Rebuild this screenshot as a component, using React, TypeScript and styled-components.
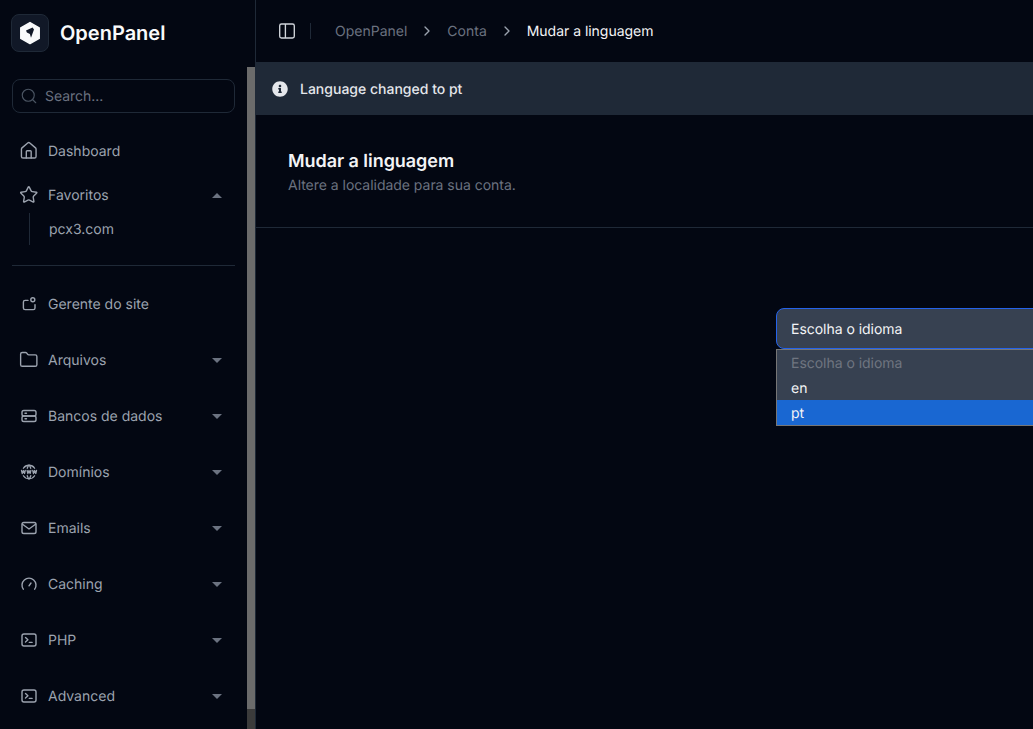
import { ReactNode } from 'react';
import styled, { createGlobalStyle } from 'styled-components';
import { ChevronRight, Folder, House, Search, Star } from 'lucide-react';
import { FaInfoCircle } from 'react-icons/fa';
import { TbWorldWww } from 'react-icons/tb';

const GlobalStyle = createGlobalStyle`
  html, body {
    margin: 0;
    height: 100%;
    overflow: hidden;
    background: #030712;
    font-family: Inter, "Liberation Sans", sans-serif;
    text-rendering: geometricPrecision;
  }
  #root {
    height: 100%;
  }
`;

const Glyph = ({ children }: { children: ReactNode }) => (
  <svg width="18" height="18" viewBox="0 0 18 18" fill="none" stroke="currentColor" strokeWidth="1.4" strokeLinecap="round" strokeLinejoin="round">
    {children}
  </svg>
);

const SiteIcon = () => (
  <Glyph>
    <path d="M8 5.4H5.1a1.7 1.7 0 0 0-1.7 1.7v5.8a1.7 1.7 0 0 0 1.7 1.7h8.2a1.7 1.7 0 0 0 1.7-1.7V9.6" />
    <circle cx="12.8" cy="4.8" r="2" />
  </Glyph>
);

const ServerIcon = () => (
  <Glyph>
    <rect x="2" y="3.5" width="14" height="5.5" rx="1.8" />
    <rect x="2" y="9" width="14" height="5.5" rx="1.8" />
    <path d="M5 6.2h1.5M5 11.8h1.5" />
  </Glyph>
);

const MailIcon = () => (
  <Glyph>
    <rect x="2" y="3.5" width="14" height="11" rx="1.8" />
    <path d="M2.5 5.2L9 10l6.5-4.8" />
  </Glyph>
);

const GaugeIcon = () => (
  <Glyph>
    <path d="M3.3 14.2A7 7 0 1 1 14.7 14.2" />
    <path d="M9 10.8l2-2.8" />
  </Glyph>
);

const TerminalIcon = () => (
  <Glyph>
    <rect x="2" y="3" width="14" height="12" rx="2" />
    <path d="M5.5 6.6l2.4 2.2-2.4 2.2M9.3 11.4h2.8" />
  </Glyph>
);

const PanelIcon = () => (
  <svg width="18" height="18" viewBox="0 0 18 18" fill="none" stroke="currentColor" strokeWidth="1.35" strokeLinejoin="round">
    <rect x="1.7" y="2" width="14.6" height="14" rx="1.8" />
    <path d="M7.4 2v14" />
  </svg>
);

const LogoMark = () => (
  <svg width="22" height="24" viewBox="0 0 22 24">
    <path fill="#f9fafb" stroke="#f9fafb" strokeWidth="1.5" strokeLinejoin="round" d="M11 1.6l9.2 5.2v10.6L11 22.6l-9.2-5.2V6.8L11 1.6z" />
    <path fill="#111827" d="M7 9.4l6.6-3 1.4 2-3 8.4-1.1-3.8-3-1.4-.9-2.2z" />
  </svg>
);

const links: { label: string; icon: ReactNode }[] = [
  { label: 'Arquivos', icon: <Folder strokeWidth={1.7} /> },
  { label: 'Bancos de dados', icon: <ServerIcon /> },
  { label: 'Domínios', icon: <TbWorldWww size={18} strokeWidth={1.75} /> },
  { label: 'Emails', icon: <MailIcon /> },
  { label: 'Caching', icon: <GaugeIcon /> },
  { label: 'PHP', icon: <TerminalIcon /> },
  { label: 'Advanced', icon: <TerminalIcon /> },
];

export default function App() {
  return (
    <>
      <GlobalStyle />
      <Layout>
        <Sidebar>
          <Brand>
            <LogoBox>
              <LogoMark />
            </LogoBox>
            <BrandName>OpenPanel</BrandName>
          </Brand>
          <SidebarBody>
            <SidebarContent>
              <SearchBox>
                <Search size={18} strokeWidth={1.5} />
                <span>Search...</span>
              </SearchBox>
              <Nav>
                <NavItem>
                  <House strokeWidth={1.7} />
                  <span>Dashboard</span>
                </NavItem>
                <NavItem>
                  <Star strokeWidth={1.7} />
                  <span>Favoritos</span>
                  <Caret $up />
                </NavItem>
                <SubList>
                  <SubItem>pcx3.com</SubItem>
                </SubList>
              </Nav>
              <Divider />
              <GroupList>
                <NavItem>
                  <SiteIcon />
                  <span>Gerente do site</span>
                </NavItem>
                {links.map((link) => (
                  <NavItem key={link.label}>
                    {link.icon}
                    <span>{link.label}</span>
                    <Caret />
                  </NavItem>
                ))}
              </GroupList>
            </SidebarContent>
            <ScrollTrack>
              <ScrollThumb />
            </ScrollTrack>
          </SidebarBody>
        </Sidebar>
        <Main>
          <Topbar>
            <PanelButton>
              <PanelIcon />
            </PanelButton>
            <Crumbs>
              <Crumb>OpenPanel</Crumb>
              <ChevronRight size={16} />
              <Crumb>Conta</Crumb>
              <ChevronRight size={16} />
              <Crumb $current>Mudar a linguagem</Crumb>
            </Crumbs>
          </Topbar>
          <Alert>
            <FaInfoCircle size={16} />
            <span>Language changed to pt</span>
          </Alert>
          <PageHeader>
            <PageTitle>Mudar a linguagem</PageTitle>
            <PageText>Altere a localidade para sua conta.</PageText>
          </PageHeader>
          <FormArea>
            <SelectWrap>
              <SelectBox>Escolha o idioma</SelectBox>
              <OptionList>
                <Option $muted>Escolha o idioma</Option>
                <Option>en</Option>
                <Option $active>pt</Option>
              </OptionList>
            </SelectWrap>
          </FormArea>
        </Main>
      </Layout>
    </>
  );
}

const Layout = styled.div`
  display: flex;
  width: 1033px;
  height: 729px;
  overflow: hidden;
  background: #030712;
`;

const Sidebar = styled.aside`
  flex: 0 0 256px;
  display: flex;
  flex-direction: column;
  height: 729px;
  box-sizing: border-box;
  border-right: 1px solid #1f2937;
`;

const Brand = styled.div`
  flex: 0 0 67px;
  box-sizing: border-box;
  display: flex;
  align-items: flex-start;
  gap: 11px;
  padding: 14px 0 0 11px;
`;

const LogoBox = styled.div`
  width: 38px;
  height: 38px;
  box-sizing: border-box;
  display: flex;
  align-items: center;
  justify-content: center;
  border-radius: 8px;
  background: #111827;
  border: 1px solid #1f2937;
`;

const BrandName = styled.div`
  color: #f9fafb;
  font-size: 20px;
  font-weight: 600;
  line-height: 38px;
`;

const SidebarBody = styled.div`
  flex: 1;
  display: flex;
  min-height: 0;
`;

const SidebarContent = styled.div`
  flex: 1;
  min-width: 0;
  padding: 12px 12px 0;
`;

const ScrollTrack = styled.div`
  flex: 0 0 8px;
  background: #3b3b3b;
`;

const ScrollThumb = styled.div`
  height: 642px;
  background: #6b6b6b;
`;

const SearchBox = styled.div`
  height: 34px;
  box-sizing: border-box;
  display: flex;
  align-items: center;
  gap: 7px;
  padding: 0 10px 0 7px;
  border: 1px solid #1f2937;
  border-radius: 8px;
  color: #6b7280;
  font-size: 14px;
  letter-spacing: -0.03px;
  svg {
    color: #4b5563;
  }
`;

const Nav = styled.nav`
  display: flex;
  flex-direction: column;
  gap: 8px;
  margin-top: 20px;
`;

const GroupList = styled.div`
  display: flex;
  flex-direction: column;
  gap: 20px;
  margin-top: 20px;
`;

const NavItem = styled.div`
  height: 36px;
  display: flex;
  align-items: center;
  gap: 10px;
  padding: 0 13px 0 8px;
  color: #9ca3af;
  font-size: 14px;
  span {
    flex: 1;
  }
  svg {
    flex: none;
  }
  svg.lucide {
    width: 19.5px;
    height: 19.5px;
    margin: 0 -0.75px;
  }
`;

const Caret = styled.i<{ $up?: boolean }>`
  width: 0;
  height: 0;
  border-left: 5px solid transparent;
  border-right: 5px solid transparent;
  ${(p) => (p.$up ? 'border-bottom: 5px solid #6b7280;' : 'border-top: 5px solid #6b7280;')}
`;

const SubList = styled.div`
  margin: -8px 0 0 17px;
  padding: 0 0 0 19px;
  border-left: 1px solid #1f2937;
  height: 32px;
  display: flex;
  align-items: center;
`;

const SubItem = styled.div`
  color: #9ca3af;
  font-size: 14px;
`;

const Divider = styled.hr`
  border: 0;
  height: 1px;
  margin: 20px 0 0;
  background: #1f2937;
`;

const Main = styled.main`
  flex: 1;
  min-width: 0;
  display: flex;
  flex-direction: column;
`;

const Topbar = styled.header`
  flex: 0 0 62px;
  display: flex;
  align-items: center;
  padding-left: 22px;
`;

const PanelButton = styled.div`
  display: flex;
  align-items: center;
  height: 16px;
  padding-right: 14px;
  margin-right: 24px;
  border-right: 1px solid #1f2937;
  color: #d1d5db;
`;

const Crumbs = styled.div`
  display: flex;
  align-items: center;
  gap: 12px;
  color: #9ca3af;
`;

const Crumb = styled.span<{ $current?: boolean }>`
  font-size: 14px;
  letter-spacing: ${(p) => (p.$current ? '-0.03px' : '0')};
  color: ${(p) => (p.$current ? '#f3f4f6' : '#6b7280')};
`;

const Alert = styled.div`
  flex: 0 0 53px;
  display: flex;
  align-items: center;
  gap: 12px;
  padding-left: 16px;
  background: #1f2937;
  color: #e5e7eb;
  font-size: 14px;
  font-weight: 500;
  span {
    margin-top: 2px;
  }
`;

const PageHeader = styled.div`
  flex: 0 0 113px;
  box-sizing: border-box;
  padding: 36px 32px 0;
  border-bottom: 1px solid #1f2937;
`;

const PageTitle = styled.h1`
  margin: 0;
  color: #f3f4f6;
  font-size: 18px;
  font-weight: 600;
  line-height: 22px;
  letter-spacing: -0.05px;
`;

const PageText = styled.p`
  margin: 3px 0 0;
  color: #6b7280;
  font-size: 14px;
  line-height: 20px;
  letter-spacing: -0.03px;
`;

const FormArea = styled.div`
  padding: 80px 0 0 520px;
`;

const SelectWrap = styled.div`
  position: relative;
  width: 500px;
  letter-spacing: -0.03px;
`;

const SelectBox = styled.div`
  height: 41px;
  box-sizing: border-box;
  display: flex;
  align-items: center;
  padding: 2px 0 0 14px;
  background: #374151;
  border: 1px solid #2563eb;
  border-radius: 8px;
  color: #f3f4f6;
  font-size: 14px;
`;

const OptionList = styled.div`
  position: absolute;
  top: 41px;
  left: 0;
  right: 0;
  background: #374151;
  border: 1px solid #767676;
`;

const Option = styled.div<{ $muted?: boolean; $active?: boolean }>`
  height: 25px;
  box-sizing: border-box;
  display: flex;
  align-items: center;
  padding: 2px 0 0 14px;
  font-size: 14px;
  color: ${(p) => (p.$muted ? '#6f7580' : '#f3f4f6')};
  background: ${(p) => (p.$active ? '#1967d2' : 'transparent')};
`;
